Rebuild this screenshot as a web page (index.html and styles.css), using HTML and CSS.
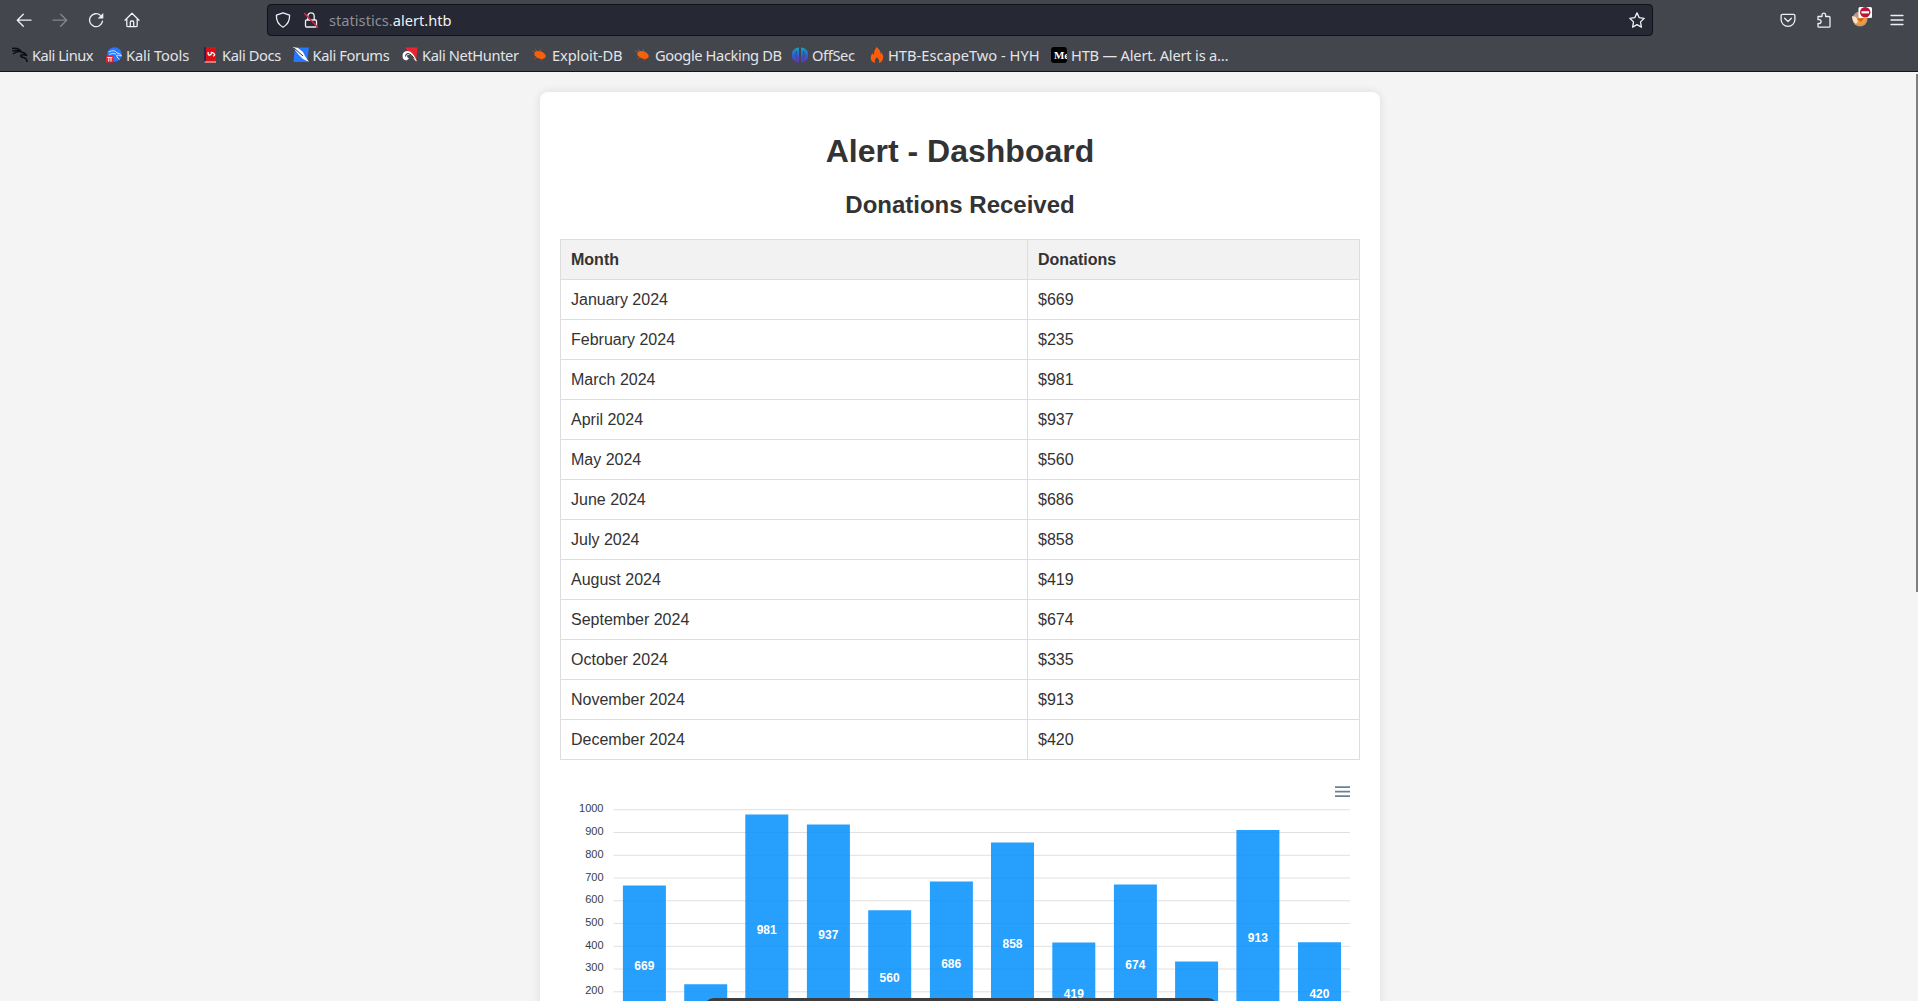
FILE: index.html
```html
<!DOCTYPE html>
<html lang="en">
<head>
<meta charset="utf-8">
<title>Alert - Dashboard</title>
<link rel="stylesheet" href="styles.css">
</head>
<body>
<header class="browser">
  <div class="toolbar">
    <nav class="nav-buttons">
      <svg class="icon" viewBox="0 0 16 16"><path d="M15 8.200H1.500M7.300 2.200l-6 6 6 6"/></svg>
      <svg class="icon disabled" viewBox="0 0 16 16"><path d="M1 8.200h13.500M8.700 2.200l6 6-6 6"/></svg>
      <svg class="icon" viewBox="0 0 16 16"><path d="M14.500 9.200a6.500 6.500 0 1 1-2.200-6"/><path class="solid" d="M15.300 1v5.600H9.700z"/></svg>
      <svg class="icon" viewBox="0 0 16 16"><path d="M1 8.200 8 1.300l7 6.900M2.800 7v6.400q0 1.300 1.300 1.300h7.800q1.300 0 1.300-1.300V7M6.300 14.500V10q0-1 1-1h1.400q1 0 1 1v4.500"/></svg>
    </nav>
    <div class="urlbar">
      <svg class="icon" viewBox="0 0 16 16"><path d="M8 .8 14.600 3.200q.3 8-6.600 12Q1.100 11.200 1.400 3.200z"/></svg>
      <svg class="icon lock" viewBox="0 0 16 16"><path d="M3.500 8h9q1 0 1 1v5q0 1-1 1h-9q-1 0-1-1V9q0-1 1-1zM4.800 7.800V4a3.200 3.200 0 0 1 6.400 0v3.800"/><path class="slash" d="M1.500 1.500l13 13.500"/></svg>
      <span class="url">statistics.<b>alert.htb</b></span>
      <svg class="icon star" viewBox="0 0 16 16"><path d="M8 .9l2.200 4.700 5 .7-3.700 3.600.9 5.200L8 12.600l-4.400 2.500.9-5.200L.8 6.300l5-.7z"/></svg>
    </div>
    <div class="actions">
      <svg class="icon" viewBox="0 0 16 16"><path d="M2.600 2.300h10.800q1.500 0 1.500 1.500V7.500a6.900 6.900 0 0 1-13.800 0V3.800q0-1.500 1.500-1.500zM4.600 6.300 8 9.500l3.400-3.200"/></svg>
      <svg class="icon" viewBox="0 0 16 16"><path d="M2 4.500h4V3a1.800 1.800 0 0 1 3.600 0v1.500H13q1 0 1 1v8.700q0 1-1 1H3q-1 0-1-1v-2.700h1.200a1.900 1.900 0 0 0 0-3.800H2z"/></svg>
      <svg class="fox" viewBox="0 0 20 20"><circle cx="8" cy="12" r="7.500" fill="#b99a80"/><path d="M1 9l4 2 8-2 2 3-3 5-6 1-4-3z" fill="#f29b38"/><path d="M0 9l4 1 2 4-2 3q-4-3-4-8z" fill="#f8e3cc"/><path d="M5 12l7-1-3 4z" fill="#c9601c"/><rect x="6.500" y="0" width="13.500" height="11" rx="1.500" fill="#fff"/><circle cx="13.200" cy="5.300" r="5.200" fill="#b9163a"/><rect x="9.500" y="4.200" width="7.500" height="2.200" fill="#fff"/></svg>
      <svg class="icon menu" viewBox="0 0 16 16"><path d="M2 3.500h12M2 8h12M2 12.500h12"/></svg>
    </div>
  </div>
  <nav class="bookmarks">
    <a class="tight-4"><svg class="fav" viewBox="0 0 16 16"><path d="M0 1.500q7-1 9 3M.5 4q5-1 8 .5M1 7q4-3 7.500-2.300 4 .5 6.500 4-3-1.700-6-.7-1 2 2.500 2.500 3.500.8 3.500 4.500" fill="none" stroke="#0c0d0f" stroke-width="1.500"/></svg><span>Kali Linux</span></a>
    <a class="tight-1"><svg class="fav" viewBox="0 0 16 16"><circle cx="8.500" cy="7.500" r="7.300" fill="#2777ff"/><path d="M2.500 5q6-3 8.500 1 3 0 4.500 3-3-1.500-5-.5 1 3 3 4M3 7.500q4-2 7-.5" fill="none" stroke="#cfe0ff"/><rect y="8.500" width="7.500" height="7" rx="1" fill="#e3222c"/><path d="M1.300 10.500h5M2.800 10.500v4M5 10.500v4" stroke="#fff"/></svg><span>Kali Tools</span></a>
    <a class="tight-3 near"><svg class="fav" viewBox="0 0 16 16"><path d="M1 0h12v15.500H1z" fill="#db0f14"/><path d="M1 0h2v15.500H1z" fill="#1d2c55"/><path d="M1.500 15H13" stroke="#e9dede"/><path d="M5.200 5q-.5 3.500 1.500 3T8.300 6t2.200.2T10 9.200" fill="none" stroke="#fff" stroke-width="1.300"/></svg><span>Kali Docs</span></a>
    <a class="tight-3"><svg class="fav" viewBox="0 0 16 16"><path d="M3.500.5H16l-2 14.500H.5L1.500 4z" fill="#2777ff"/><path d="M0 0l5 1 5 4 2 4 4 6-6-3-5-5z" fill="#fff"/><path d="M1 1l9 8" stroke="#26324c"/></svg><span>Kali Forums</span></a>
    <a class="tight-3"><svg class="fav" viewBox="0 0 16 16"><path d="M3 .5h12.500L14 15z" fill="#ea2433"/><path d="M.5 9Q.5 4 6 4q5 .5 9 10.500-1.500-.5-3-2.500Q8.500 6.500 5.500 8q-1.500 1.500 1.500 3.500l-2.500 2Q.5 13 .5 9z" fill="#fff"/><path d="M3.500 9.500q0-3.500 3-3 3 .8 5.500 5" fill="none" stroke="#17191d"/></svg><span>Kali NetHunter</span></a>
    <a class="tight-1"><svg class="fav" viewBox="0 0 16 16"><path d="M0 4l4 1M3 2l3 3M8 2l1 3M2 12l4-2M9 14l1-3" stroke="#a45425" stroke-width=".8"/><ellipse cx="8" cy="8" rx="6" ry="3.600" transform="rotate(18 8 8)" fill="#f4600c"/></svg><span>Exploit-DB</span></a>
    <a class="tight-3"><svg class="fav" viewBox="0 0 16 16"><path d="M0 4l4 1M3 2l3 3M8 2l1 3M2 12l4-2M9 14l1-3" stroke="#a45425" stroke-width=".8"/><ellipse cx="8" cy="8" rx="6" ry="3.600" transform="rotate(18 8 8)" fill="#f4600c"/></svg><span>Google Hacking DB</span></a>
    <a class="tight-3"><svg class="fav" viewBox="0 0 16 16"><defs><linearGradient id="offsec" x2="0" y2="1"><stop offset="0" stop-color="#14a3b8"/><stop offset=".5" stop-color="#2b62cf"/><stop offset="1" stop-color="#6b2fb5"/></linearGradient></defs><path d="M7 .5v15A7.500 7.500 0 0 1 7 .5zM9 .5v15A7.500 7.500 0 0 0 9 .5z" fill="url(#offsec)"/><path d="M4.500 4q-1.500 4 0 8M11.500 4q1.500 4 0 8" stroke="#4a3d83" fill="none"/></svg><span>OffSec</span></a>
    <a class="near"><svg class="fav" viewBox="0 0 16 16"><path d="M7.500 0q5 4 3.800 7 .9-.5 1-1.800 2.500 3.500 1.800 6-.8 4-4.400 4.800 1.800-2.500-1.900-6-3 3.500-1.500 6-4.500-1-4.600-5.500 0-2.500 2-4.500.3 1.500 1.200 2Q4.500 4 7.500 0z" fill="#ff5c0a"/></svg><span>HTB-EscapeTwo - HYH</span></a>
    <a class="tight-2"><span class="fav medium">Me</span><span>HTB — Alert. Alert is a…</span></a>
  </nav>
</header>
<main class="page">
  <section class="card">
    <h1>Alert - Dashboard</h1>
    <h2>Donations Received</h2>
    <table>
      <thead><tr><th class="month">Month</th><th>Donations</th></tr></thead>
      <tbody>
        <tr><td>January 2024</td><td>$669</td></tr>
        <tr><td>February 2024</td><td>$235</td></tr>
        <tr><td>March 2024</td><td>$981</td></tr>
        <tr><td>April 2024</td><td>$937</td></tr>
        <tr><td>May 2024</td><td>$560</td></tr>
        <tr><td>June 2024</td><td>$686</td></tr>
        <tr><td>July 2024</td><td>$858</td></tr>
        <tr><td>August 2024</td><td>$419</td></tr>
        <tr><td>September 2024</td><td>$674</td></tr>
        <tr><td>October 2024</td><td>$335</td></tr>
        <tr><td>November 2024</td><td>$913</td></tr>
        <tr><td>December 2024</td><td>$420</td></tr>
      </tbody>
    </table>
    <svg class="chart" width="800" height="241" viewBox="0 0 800 241">
      <g class="chart-menu"><path d="M775 27.200h15M775 31.700h15M775 36.200h15"/></g>
      <g class="grid">
        <path d="M53.500 49.700h736.500M53.500 72.500h736.500M53.500 95.300h736.500M53.500 118h736.500M53.500 140.800h736.500M53.500 163.500h736.500M53.500 186.300h736.500M53.500 209h736.500M53.500 231.800h736.500"/>
      </g>
      <g class="axis">
        <text x="43.500" y="52.300">1000</text><text x="43.500" y="75.100">900</text><text x="43.500" y="97.600">800</text><text x="43.500" y="120.500">700</text><text x="43.500" y="143.300">600</text><text x="43.500" y="166">500</text><text x="43.500" y="188.600">400</text><text x="43.500" y="211.300">300</text><text x="43.500" y="234.300">200</text>
      </g>
      <g class="bars">
        <path d="M62.900 125.400h43V241h-43zM124.200 224.200h43v17h-43zM185.300 54.400h43V241h-43zM246.900 64.400h43V241h-43zM308.200 150.300h43V241h-43zM369.900 121.600h43V241h-43zM431 82.400h43V241h-43zM492.300 182.400h43V241h-43zM553.900 124.500h43V241h-43zM615.100 201.400h43V241h-43zM676.400 69.900h43V241h-43zM738 182.200h43V241h-43z"/>
      </g>
      <g class="values">
        <text x="84.300" y="209.500">669</text><text x="206.700" y="173.700">981</text><text x="268.300" y="178.700">937</text><text x="329.600" y="221.600">560</text><text x="391.200" y="207.600">686</text><text x="452.500" y="187.700">858</text><text x="513.800" y="237.700">419</text><text x="575.300" y="208.700">674</text><text x="697.800" y="181.700">913</text><text x="759.400" y="237.700">420</text>
      </g>
    </svg>
  </section>
  <div class="scrollbar"></div>
  <div class="overlay-edge"></div>
</main>
</body>
</html>
```
FILE: styles.css
```css
* { box-sizing: border-box; }
body {
  margin: 0;
  height: 1001px;
  overflow: hidden;
  display: flex;
  flex-direction: column;
  background: #f4f4f4;
  font-family: "Liberation Sans", Arial, sans-serif;
  color: #333;
}
.browser {
  flex: none;
  height: 72px;
  background: #44464d;
  border-bottom: 1px solid #131419;
  color: #e3e4e7;
  font-family: "Noto Sans", sans-serif;
  font-size: 14.67px;
}
.toolbar {
  height: 40px;
  display: flex;
  align-items: center;
  justify-content: space-between;
  padding: 0 13px 0 16px;
}
.nav-buttons { display: flex; gap: 20px; width: 251px; }
.icon {
  width: 16px;
  height: 16px;
  flex: none;
  fill: none;
  stroke: #eff0f3;
  stroke-width: 1.3;
  stroke-linecap: round;
  stroke-linejoin: round;
}
.icon .solid { fill: #eff0f3; stroke: none; }
.icon .slash { stroke: #d9244c; stroke-width: 1.5; }
.disabled { opacity: .38; }
.urlbar {
  width: 1386px;
  height: 32px;
  display: flex;
  align-items: center;
  padding: 0 7px;
  background: #262833;
  border: 1px solid #101117;
  border-radius: 4px;
}
.lock { margin-left: 12px; }
.url { margin-left: 10px; color: #8d8f98; }
.url b { font-weight: 400; color: #f0f1f4; }
.star { margin-left: auto; }
.actions {
  margin-left: auto;
  display: flex;
  align-items: center;
  gap: 20px;
}
.fox { flex: none; width: 20px; height: 20px; margin: -6px -2px 0 0; }
.menu { margin-left: -1px; }
.bookmarks {
  display: grid;
  grid-template-columns: 94px 97px 89.5px 109.5px 130px 103px 157px 77px 182px 200px;
  align-items: center;
  height: 30px;
  padding-left: 12px;
}
.bookmarks a { display: flex; align-items: center; gap: 4px; white-space: nowrap; }
.bookmarks .near { gap: 3px; }
.tight-1 { letter-spacing: -.12px; }
.tight-2 { letter-spacing: -.2px; }
.tight-3 { letter-spacing: -.38px; }
.tight-4 { letter-spacing: -.5px; }
.fav { width: 16px; height: 16px; flex: none; }
.medium {
  overflow: hidden;
  padding-left: 3px;
  border-radius: 3px;
  background: #000;
  color: #fff;
  font: bold 11px/16px "Liberation Serif", serif;
}
.page {
  position: relative;
  height: 929px;
  overflow: hidden;
}
.card {
  width: 840px;
  height: 1100px;
  margin: 20px auto 0 540px;
  padding: 20px;
  background: #fff;
  border-radius: 8px;
  box-shadow: 0 0 10px rgba(0, 0, 0, .1);
}
h1, h2 { margin: 0; text-align: center; }
h1 { margin-top: 21px; font-size: 32px; line-height: 36px; }
h2 { margin-top: 22px; font-size: 24px; line-height: 28px; }
table {
  width: 800px;
  margin-top: 20px;
  table-layout: fixed;
  border-collapse: collapse;
}
th, td {
  height: 40px;
  padding: 0 10px;
  border: 1px solid #ddd;
  text-align: left;
  font-size: 16px;
}
th { background: #f2f2f2; }
.month { width: 467px; }
.chart { display: block; }
.chart-menu { stroke: #6e8192; stroke-width: 1.8; }
.grid { stroke: #e0e0e0; stroke-width: 1; }
.axis { fill: #373d3f; font-size: 11px; text-anchor: end; }
.bars { fill: #008ffb; fill-opacity: .85; }
.values { fill: #fff; font-size: 12px; font-weight: 700; text-anchor: middle; }
.scrollbar {
  position: absolute;
  top: 2px;
  right: 0;
  width: 2px;
  height: 518px;
  background: #7d7f81;
}
.overlay-edge {
  position: absolute;
  left: 704px;
  top: 926px;
  width: 514px;
  height: 20px;
  border-radius: 10px;
  background: #3c3d3f;
}
```
